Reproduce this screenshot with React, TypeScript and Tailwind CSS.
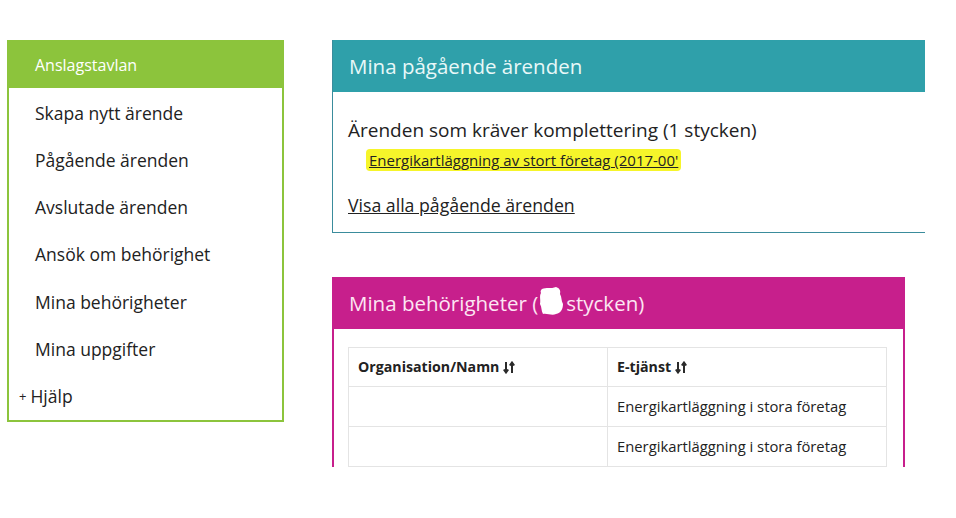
import React from "react";

const menu = [
  "Skapa nytt ärende",
  "Pågående ärenden",
  "Avslutade ärenden",
  "Ansök om behörighet",
  "Mina behörigheter",
  "Mina uppgifter",
];

function SortIcon() {
  return (
    <svg width="12" height="13" viewBox="0 0 12 13" className="inline-block ml-1 -mt-0.5" fill="none" stroke="#2b2b2b" strokeWidth="2">
      <path d="M3 1v10M0.8 8.5L3 11.5l2.2-3" />
      <path d="M9 12V2M6.8 4.5L9 1.5l2.2 3" />
    </svg>
  );
}

function Blob() {
  return (
    <svg width="26" height="30" viewBox="0 0 26 30" className="inline-block align-middle -mt-1">
      <path d="M4 3 C8 1 13 3 18 1 C21 2 23 4 22 8 C24 11 23 15 25 18 C25 23 23 27 18 28 C14 30 9 27 5 28 C3 25 4 21 2 18 C3 14 1 10 3 7 C2 5 3 4 4 3 Z" fill="#ffffff" />
    </svg>
  );
}

export default function App() {
  return (
    <div className="min-h-[518px] w-[956px] bg-white text-[#222] flex items-start gap-[48px] pl-[7px] pt-[40px]" style={{ fontFamily: '"Open Sans", "Noto Sans", sans-serif' }}>
      <aside className="w-[277px] border-2 border-[#8cc43c] shrink-0">
        <div className="h-[46px] bg-[#8cc43c] flex items-center pl-[26px] text-white text-[16px]">Anslagstavlan</div>
        <ul className="pt-[1px]">
          {menu.map((m) => (
            <li key={m} className="h-[47.3px] flex items-center pl-[26px] text-[17.5px]">{m}</li>
          ))}
          <li className="h-[47.3px] flex items-center pl-[10px] text-[17.5px]">
            <span className="text-[13px] mr-[4px]">+</span>Hjälp
          </li>
        </ul>
      </aside>

      <main className="flex flex-col gap-[44px]">
        <section className="w-[593px] border-l border-b border-[#3a8c9c]">
          <div className="h-[52px] bg-[#2fa0aa] flex items-center pl-[16px] text-[#e8f8f8] text-[20.5px]">Mina pågående ärenden</div>
          <div className="pl-[15px] pt-[24px] pb-[14px]">
            <p className="text-[19px] leading-[28px]">Ärenden som kräver komplettering (1 stycken)</p>
            <div className="pl-[18px] mt-[4px]">
              <a href="#" className="inline-block bg-[#f6f52a] px-[3px] text-[15px] leading-[22px] underline rounded-sm">Energikartläggning av stort företag (2017-00'</a>
            </div>
            <a href="#" className="inline-block mt-[20px] text-[17.7px] underline leading-[26px]">Visa alla pågående ärenden</a>
          </div>
        </section>

        <section className="w-[573px] border-x-2 border-[#c71f8c]">
          <div className="h-[52px] -mx-[2px] bg-[#c71f8c] flex items-center pl-[17px] text-[#fde6f3] text-[20.5px]">
            <span>Mina behörigheter (</span>
            <Blob />
            <span className="ml-[2px]">stycken)</span>
          </div>
          <div className="pl-[14px] pr-[16px] pt-[18px]">
            <table className="w-full border-collapse">
              <tbody>
                <tr className="h-[39px]">
                  <th className="w-[259px] border border-[#e4e4e4] text-left font-bold pl-[9px] text-[14.2px]">Organisation/Namn<SortIcon /></th>
                  <th className="border border-[#e4e4e4] text-left font-bold pl-[9px] text-[14.2px]">E-tjänst<SortIcon /></th>
                </tr>
                <tr className="h-[40px]">
                  <td className="border border-[#e4e4e4]"></td>
                  <td className="border border-[#e4e4e4] pl-[9px] text-[14.8px]">Energikartläggning i stora företag</td>
                </tr>
                <tr className="h-[40px]">
                  <td className="border border-[#e4e4e4]"></td>
                  <td className="border border-[#e4e4e4] pl-[9px] text-[14.8px]">Energikartläggning i stora företag</td>
                </tr>
              </tbody>
            </table>
          </div>
        </section>
      </main>
    </div>
  );
}
